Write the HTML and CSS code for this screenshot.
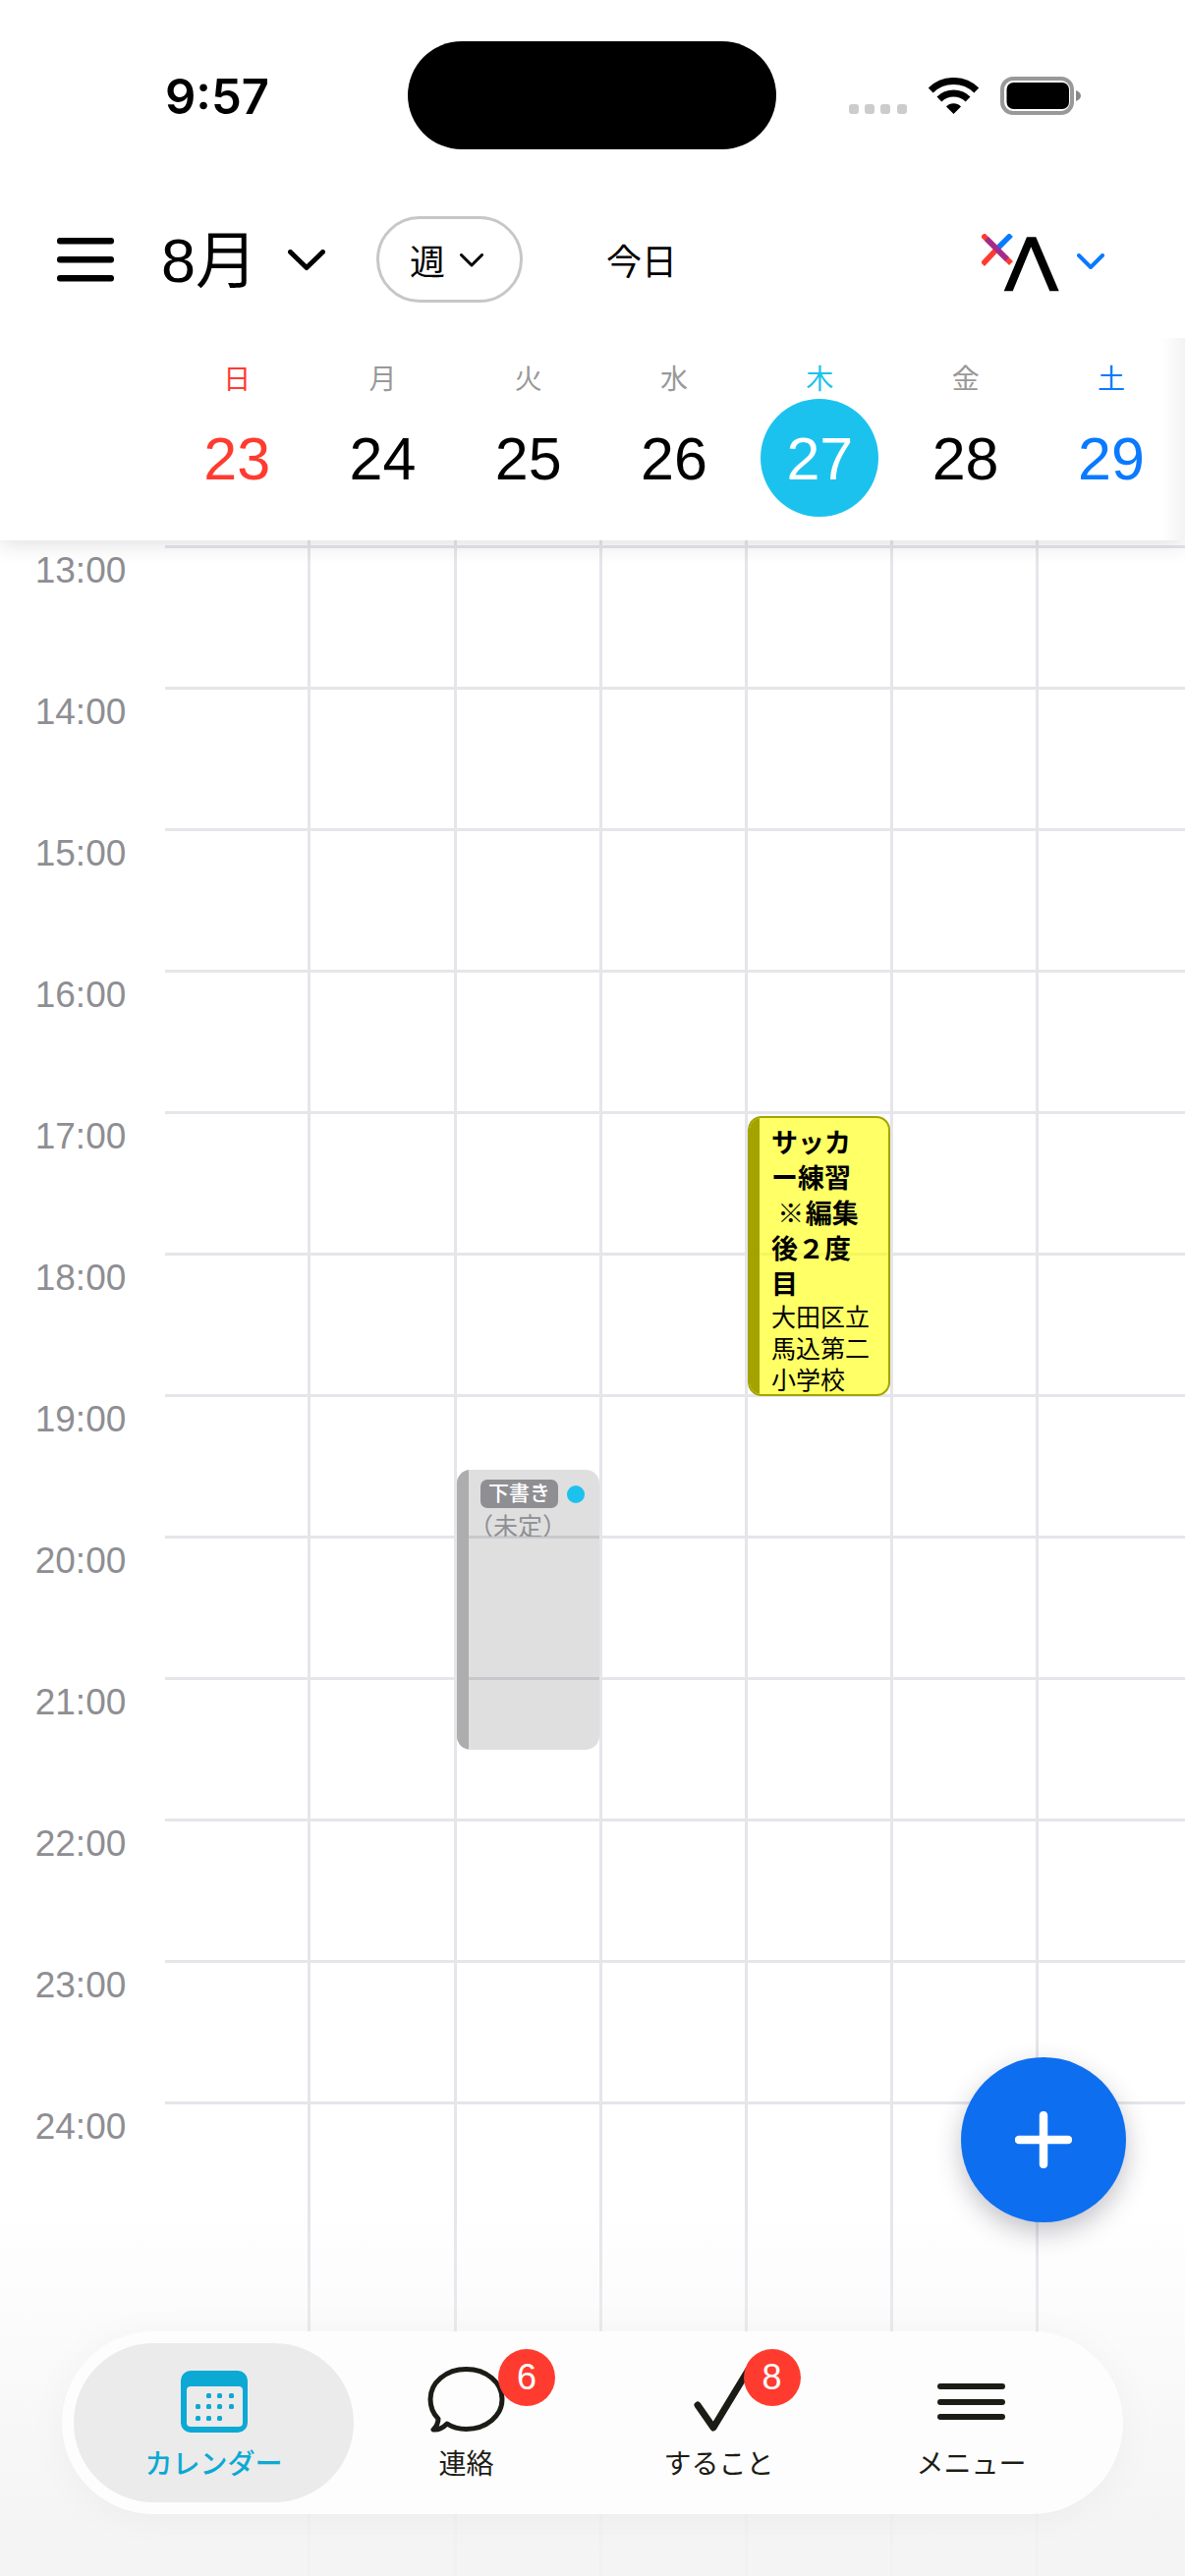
FILE: index.html

```html
<!DOCTYPE html>
<html lang="ja">
<head>
  <meta charset="UTF-8">
  <title>カレンダー</title>
  <link rel="stylesheet" href="styles.css">
</head>
<body>
  <div class="screen">

    <header class="top">
      <div class="status">
        <div class="clock">9:57</div>
        <div class="island"></div>
        <div class="status-icons">
          <svg class="signal" width="59" height="10" viewBox="0 0 59 10">
            <rect x="0" width="10" height="10" rx="3"/>
            <rect x="16" width="10" height="10" rx="3"/>
            <rect x="32" width="10" height="10" rx="3"/>
            <rect x="49" width="10" height="10" rx="3"/>
          </svg>
          <svg class="wifi" width="51" height="37" viewBox="0 0 51 37">
            <path d="M2.2 12.9A33.5 33.5 0 0 1 48.8 12.9" fill="none" stroke="#000" stroke-width="7"/>
            <path d="M10.9 21.9A21 21 0 0 1 40.1 21.9" fill="none" stroke="#000" stroke-width="7"/>
            <path d="M25.5 37L18 29.5A10.5 10.5 0 0 1 33 29.5Z"/>
          </svg>
          <svg class="battery" width="82" height="39" viewBox="0 0 82 39">
            <rect x="2" y="2" width="71" height="35" rx="11" fill="none" stroke="#999" stroke-width="4"/>
            <rect x="6.5" y="6" width="63.5" height="27" rx="7"/>
            <path d="M77 14C80 15 82 17 82 19.500C82 22 80 24 77 25Z" fill="#888"/>
          </svg>
        </div>
      </div>

      <div class="toolbar">
        <svg class="hamburger" width="58" height="45" viewBox="0 0 58 45">
          <rect y="0" width="58" height="6.500" rx="3"/>
          <rect y="19" width="58" height="6.500" rx="3"/>
          <rect y="38" width="58" height="6.500" rx="3"/>
        </svg>
        <div class="month">8月</div>
        <svg class="month-arrow" width="38" height="22" viewBox="0 0 38 22">
          <path d="M2.500 2.500L19 18.500L35.500 2.500" fill="none" stroke="#000" stroke-width="5" stroke-linecap="round" stroke-linejoin="round"/>
        </svg>
        <div class="view-pill">
          <span>週</span>
          <svg width="24" height="14" viewBox="0 0 24 14">
            <path d="M1.500 1.500L12 12L22.500 1.500" fill="none" stroke="#000" stroke-width="3" stroke-linecap="round" stroke-linejoin="round"/>
          </svg>
        </div>
        <div class="today">今日</div>
        <svg class="logo" width="79" height="59" viewBox="0 0 79 59">
          <path d="M30 1L15 16" stroke="#0a7aff" stroke-width="5.500"/>
          <path d="M1 31L15 16" stroke="#ff3b30" stroke-width="5.500"/>
          <path d="M1 1L30 30" stroke="#ff3b30" stroke-width="5.500"/>
          <path d="M5 5L26 26" stroke="#a02c8c" stroke-width="5.500"/>
          <path d="M22.700 58.300L46 3.300H55.300L78.700 58.300H69.300L50.300 13.300L31.700 58.300Z"/>
        </svg>
        <svg class="logo-arrow" width="28" height="16" viewBox="0 0 28 16">
          <path d="M2 2L14 14L26 2" fill="none" stroke="#0a7aff" stroke-width="4" stroke-linecap="round" stroke-linejoin="round"/>
        </svg>
      </div>

      <div class="week">
        <div class="day sun"><span class="day-name">日</span><span class="day-num">23</span></div>
        <div class="day"><span class="day-name">月</span><span class="day-num">24</span></div>
        <div class="day"><span class="day-name">火</span><span class="day-num">25</span></div>
        <div class="day"><span class="day-name">水</span><span class="day-num">26</span></div>
        <div class="day current"><span class="day-name">木</span><span class="day-num">27</span></div>
        <div class="day"><span class="day-name">金</span><span class="day-num">28</span></div>
        <div class="day sat"><span class="day-name">土</span><span class="day-num">29</span></div>
      </div>
    </header>

    <main class="timeline">
      <div class="hour"><div class="hour-label">13:00</div><div class="hour-line"></div></div>
      <div class="hour"><div class="hour-label">14:00</div><div class="hour-line"></div></div>
      <div class="hour"><div class="hour-label">15:00</div><div class="hour-line"></div></div>
      <div class="hour"><div class="hour-label">16:00</div><div class="hour-line"></div></div>
      <div class="hour"><div class="hour-label">17:00</div><div class="hour-line"></div></div>
      <div class="hour"><div class="hour-label">18:00</div><div class="hour-line"></div></div>
      <div class="hour"><div class="hour-label">19:00</div><div class="hour-line"></div></div>
      <div class="hour"><div class="hour-label">20:00</div><div class="hour-line"></div></div>
      <div class="hour"><div class="hour-label">21:00</div><div class="hour-line"></div></div>
      <div class="hour"><div class="hour-label">22:00</div><div class="hour-line"></div></div>
      <div class="hour"><div class="hour-label">23:00</div><div class="hour-line"></div></div>
      <div class="hour"><div class="hour-label">24:00</div><div class="hour-line"></div></div>

      <div class="columns">
        <div class="column"></div>
        <div class="column"></div>
        <div class="column">
          <div class="event draft">
            <div class="event-bar"></div>
            <div class="event-body">
              <div class="draft-head">
                <span class="draft-badge">下書き</span>
                <span class="draft-dot"></span>
              </div>
              <div class="draft-place">（未定）</div>
            </div>
          </div>
        </div>
        <div class="column"></div>
        <div class="column">
          <div class="event practice">
            <div class="event-bar"></div>
            <div class="event-body">
              <div class="event-title">サッカ<br>ー練習<br>&nbsp;※&#8202;編集<br>後２度<br>目</div>
              <div class="event-place">大田区立<br>馬込第二<br>小学校</div>
            </div>
          </div>
        </div>
        <div class="column"></div>
        <div class="column"></div>
      </div>
    </main>

    <div class="bottom-fade"></div>

    <button class="fab" type="button">
      <svg width="58" height="58" viewBox="0 0 58 58">
        <path d="M4 29H54M29 4V54" fill="none" stroke="#fff" stroke-width="8.500" stroke-linecap="round"/>
      </svg>
    </button>

    <nav class="tabbar">
      <div class="tab active">
        <div class="tab-icon">
          <svg width="68" height="63" viewBox="0 0 68 63">
            <rect width="68" height="63" rx="10" fill="#0ba9d4"/>
            <rect x="6" y="16" width="57" height="41" rx="4" fill="#ebebeb"/>
            <g fill="#0ba9d4">
              <rect x="26" y="23" width="5" height="5" rx="1.500"/>
              <rect x="37" y="23" width="5" height="5" rx="1.500"/>
              <rect x="49" y="23" width="5" height="5" rx="1.500"/>
              <rect x="15" y="34" width="5" height="5" rx="1.500"/>
              <rect x="26" y="34" width="5" height="5" rx="1.500"/>
              <rect x="37" y="34" width="5" height="5" rx="1.500"/>
              <rect x="49" y="34" width="5" height="5" rx="1.500"/>
              <rect x="15" y="46" width="5" height="5" rx="1.500"/>
              <rect x="26" y="46" width="5" height="5" rx="1.500"/>
              <rect x="37" y="46" width="5" height="5" rx="1.500"/>
            </g>
          </svg>
        </div>
        <div class="tab-label">カレンダー</div>
      </div>
      <div class="tab">
        <div class="tab-icon">
          <svg width="79" height="68" viewBox="0 0 79 68">
            <path d="M20 58C26 62 32 63.500 39.500 63.500C60 63.500 76 50 76 33C76 16 60 2.500 39.500 2.500C19 2.500 3 16 3 33C3 41 6 48 11 53C11 57 9 61 6 64C11 64.500 16 62 20 58Z" fill="none" stroke="#1c1c16" stroke-width="5" stroke-linejoin="round"/>
          </svg>
          <span class="badge chat-badge">6</span>
        </div>
        <div class="tab-label">連絡</div>
      </div>
      <div class="tab">
        <div class="tab-icon check-icon">
          <svg width="62" height="68" viewBox="0 0 62 68">
            <path d="M5 39L21 62L58 1" fill="none" stroke="#1c1c16" stroke-width="7" stroke-linecap="round" stroke-linejoin="round"/>
          </svg>
          <span class="badge todo-badge">8</span>
        </div>
        <div class="tab-label">すること</div>
      </div>
      <div class="tab">
        <div class="tab-icon">
          <svg width="69" height="68" viewBox="0 0 69 68">
            <path d="M3 20H66M3 36H66M3 51H66" fill="none" stroke="#1c1c16" stroke-width="6" stroke-linecap="round"/>
          </svg>
        </div>
        <div class="tab-label">メニュー</div>
      </div>
    </nav>

  </div>
</body>
</html>
```

FILE: styles.css

```css
* {
  box-sizing: border-box;
}

body {
  margin: 0;
  background: #fff;
  font-family: "Liberation Sans", "Noto Sans CJK JP", sans-serif;
  color: #000;
}

.screen {
  position: relative;
  width: 1206px;
  height: 2622px;
  overflow: hidden;
  background: #fff;
}

/* header */

.top {
  position: relative;
  z-index: 2;
  height: 550px;
  background: #fff;
  box-shadow: 0 2px 22px rgba(40, 40, 60, 0.16);
}

.status {
  display: flex;
  height: 220px;
  padding-top: 42px;
}

.clock {
  width: 415px;
  padding-left: 168px;
  font-family: Inter, sans-serif;
  font-size: 49px;
  font-weight: 600;
  line-height: 113px;
}

.island {
  width: 375px;
  height: 110px;
  border-radius: 55px;
  background: #000;
}

.status-icons {
  display: flex;
  align-items: flex-end;
  height: 75px;
  margin-left: 74px;
}

.status-icons svg {
  display: block;
}

.signal {
  margin-bottom: 1px;
  fill: #ccc;
}

.wifi {
  margin-left: 22px;
  margin-bottom: 1px;
}

.battery {
  margin-left: 22px;
}

.toolbar {
  display: flex;
  align-items: center;
  height: 88px;
  padding: 0 82px 0 58px;
}

.month {
  margin-left: 48px;
  margin-top: 2px;
  font-size: 63px;
  line-height: 86px;
}

.month-arrow {
  margin-left: 31px;
  margin-top: 2px;
}

.view-pill {
  display: flex;
  align-items: center;
  width: 149px;
  height: 88px;
  margin-left: 52px;
  padding-left: 31px;
  border: 3px solid #c7c7c7;
  border-radius: 44px;
  font-size: 36px;
}

.view-pill svg {
  margin-left: 15px;
  margin-top: 2px;
}

.today {
  margin-left: 85px;
  font-size: 36px;
}

.logo {
  margin-left: auto;
  margin-top: 6px;
}

.logo-arrow {
  margin-left: 18px;
  margin-top: 4px;
}

.week {
  position: relative;
  display: grid;
  grid-template-columns: repeat(7, 148.3px);
  height: 242px;
  padding: 61px 0 0 167px;
}

.week::after {
  content: "";
  position: absolute;
  top: 36px;
  right: 0;
  bottom: 0;
  width: 24px;
  background: linear-gradient(to right, rgba(240, 240, 240, 0), #f3f3f3);
}

.day {
  display: flex;
  flex-direction: column;
  align-items: center;
}

.day-name {
  height: 36px;
  font-size: 28px;
  line-height: 36px;
  color: #999;
}

.day-num {
  width: 120px;
  height: 120px;
  margin-top: 1px;
  border-radius: 50%;
  font-size: 61px;
  line-height: 122px;
  text-align: center;
}

.sun .day-name,
.sun .day-num {
  color: #ff3b30;
}

.sat .day-name,
.sat .day-num {
  color: #0a7aff;
}

.current .day-name {
  color: #1cc2ee;
}

.current .day-num {
  background: #1cc2ee;
  color: #fff;
}

/* time grid */

.timeline {
  position: relative;
  height: 2072px;
  padding-top: 5px;
}

.hour {
  display: flex;
  height: 144px;
}

.hour-label {
  width: 168px;
  padding-right: 4px;
  font-size: 37px;
  line-height: 52px;
  text-align: center;
  color: #8e8e93;
}

.hour-line {
  flex: 1;
  border-top: 3px solid #e5e5ea;
}

.columns {
  position: absolute;
  top: 0;
  bottom: 0;
  left: 168px;
  display: grid;
  grid-template-columns: 148px 149px repeat(4, 148px) 149px;
}

.column {
  position: relative;
  border-right: 3px solid #e5e5ea;
}

.column:last-child {
  border-right: none;
}

.event {
  position: absolute;
  left: 0;
  display: flex;
  width: 145px;
  height: 285px;
  overflow: hidden;
  border-radius: 14px;
}

.event-bar {
  flex: none;
  width: 12px;
}

.event-body {
  flex: 1;
  min-width: 0;
}

.practice {
  top: 586px;
  border: 2.5px solid #a3a300;
  background: rgba(255, 255, 0, 0.6);
}

.practice .event-bar {
  width: 10px;
  background: #a3a300;
}

.practice .event-body {
  padding: 6px 0 0 12px;
}

.event-title {
  font-family: "Noto Sans CJK JP", sans-serif;
  font-size: 27px;
  font-weight: 700;
  line-height: 36px;
}

.event-place {
  margin-top: 1px;
  font-size: 25px;
  line-height: 32px;
}

.draft {
  top: 946px;
  background: rgba(0, 0, 0, 0.125);
}

.draft .event-bar {
  background: #adadad;
}

.draft-head {
  display: flex;
  align-items: center;
  gap: 9px;
  padding: 10px 0 0 12px;
}

.draft-badge {
  height: 29px;
  padding: 0 8px;
  border-radius: 7px;
  background: #8e8e93;
  font-size: 21px;
  font-weight: 500;
  line-height: 28px;
  color: #fff;
}

.draft-dot {
  width: 18px;
  height: 18px;
  border-radius: 50%;
  background: #1cc2ee;
}

.draft-place {
  height: 29px;
  overflow: hidden;
  font-size: 25px;
  line-height: 38px;
  color: #8e8e93;
}

/* bottom */

.bottom-fade {
  position: absolute;
  z-index: 3;
  left: 0;
  right: 0;
  bottom: 0;
  height: 380px;
  background: linear-gradient(to bottom, rgba(243, 243, 244, 0), rgba(243, 243, 244, 0.88) 85%);
}

.fab {
  position: absolute;
  z-index: 4;
  top: 2094px;
  left: 978px;
  display: flex;
  align-items: center;
  justify-content: center;
  width: 168px;
  height: 168px;
  padding: 0;
  border: none;
  border-radius: 50%;
  background: #0d6ff0;
  box-shadow: 0 10px 26px rgba(40, 40, 60, 0.28);
}

.tabbar {
  position: absolute;
  z-index: 4;
  top: 2373px;
  left: 63px;
  display: flex;
  width: 1080px;
  height: 186px;
  padding: 12px 26px 12px 12px;
  border-radius: 93px;
  background: #fdfdfd;
  box-shadow: 0 4px 40px rgba(0, 0, 0, 0.04);
}

.tab {
  display: flex;
  flex: 1;
  flex-direction: column;
  align-items: center;
  padding-top: 24px;
  color: #1c1c16;
}

.tab.active {
  flex: none;
  width: 285px;
  margin-right: -14px;
  border-radius: 81px;
  background: #ebebeb;
  color: #0ba9d4;
}

.tab-icon {
  position: relative;
  height: 68px;
}

.tab-icon svg {
  display: block;
}

.active .tab-icon svg {
  margin-top: 4px;
}

.check-icon {
  margin-left: 8px;
}

.tab-label {
  margin-top: 15px;
  font-size: 28px;
  line-height: 34px;
}

.active .tab-label {
  font-weight: 500;
}

.badge {
  position: absolute;
  top: -18px;
  width: 58px;
  height: 58px;
  border-radius: 50%;
  background: #ff3b30;
  font-size: 36px;
  line-height: 58px;
  text-align: center;
  color: #fff;
}

.chat-badge {
  left: 72px;
}

.todo-badge {
  left: 52px;
}
```
